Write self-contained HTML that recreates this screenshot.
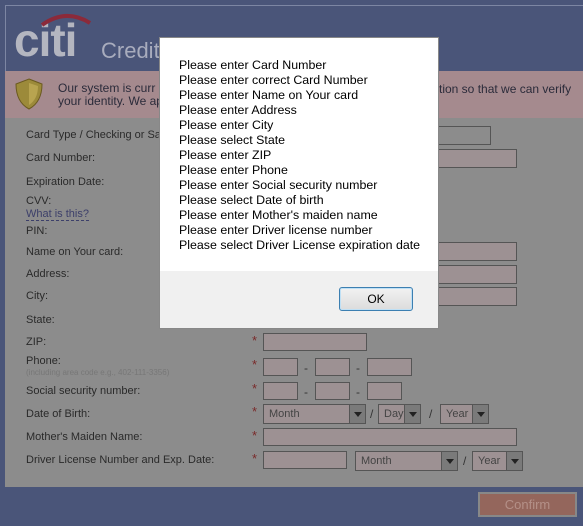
<!DOCTYPE html>
<html><head><style>
*{margin:0;padding:0;box-sizing:border-box}
body{width:583px;height:526px;overflow:hidden;background:#4a5579;font-family:"Liberation Sans",sans-serif;position:relative}
.a{position:absolute}
.l{position:absolute;left:26px;font-size:11px;color:#2a2a2a}
.in{position:absolute;background:#9d9193;border:1px solid #555;height:19px}
.st{position:absolute;color:#7a2a2a;font-size:13px}
.sel{position:absolute;background:#9d9193;border:1px solid #555;height:20px;font-size:11px;color:#444;padding:3px 5px}
.sel b{position:absolute;right:0;top:0;width:16px;height:18px;background:#7a7a7a;border-left:1px solid #555}
.sel b:after{content:"";position:absolute;left:4px;top:7px;border:4px solid transparent;border-top:5px solid #222}
.d{position:absolute;font-size:12px;color:#333}
.msg{position:absolute;left:179px;font-size:12.4px;color:#000;line-height:15px}
</style></head><body>
<div class="a" style="left:5px;top:5px;width:578px;height:66px;background:#4a5579;border-top:1px solid #7d86a3;border-left:1px solid #7d86a3"></div>
<div class="a" style="left:14px;top:13px;font-size:46px;font-weight:bold;color:#b4b6c0;letter-spacing:-1px">citi</div>
<svg class="a" style="left:40px;top:11px" width="52" height="16"><path d="M2 14 Q26 -3 50 12" stroke="#8b2a3a" stroke-width="4" fill="none"/></svg>
<div class="a" style="left:101px;top:38px;font-size:22px;color:#a8acbd">Credit</div>
<div class="a" style="left:5px;top:71px;width:578px;height:47px;background:#a58a8e"></div>
<svg class="a" style="left:14px;top:77px" width="30" height="34"><path d="M15 2 L28 7 Q28 25 15 32 Q2 25 2 7 Z" fill="#9c8a3a" stroke="#6b5a20"/><path d="M15 6 L24 9 Q24 22 15 28 Z" fill="#b8a450"/></svg>
<div class="a" style="left:58px;top:82px;font-size:12px;line-height:13px;color:#2b2b3a">Our system is curr<br>your identity. We ap</div>
<div class="a" style="left:439px;top:82px;font-size:12px;color:#2b2b3a">tion so that we can verify</div>
<div class="a" style="left:5px;top:118px;width:578px;height:369px;background:#8c8c8c"></div>
<div class="l" style="top:129px">Card Type / Checking or Sa</div>
<div class="l" style="top:152px">Card Number:</div>
<div class="l" style="top:176px">Expiration Date:</div>
<div class="l" style="top:195px">CVV:</div>
<div class="l" style="top:208px;color:#3c3f6a;border-bottom:1px dashed #3c3f6a">What is this?</div>
<div class="l" style="top:225px">PIN:</div>
<div class="l" style="top:246px">Name on Your card:</div>
<div class="l" style="top:268px">Address:</div>
<div class="l" style="top:290px">City:</div>
<div class="l" style="top:314px">State:</div>
<div class="l" style="top:336px">ZIP:</div>
<div class="l" style="top:355px">Phone:</div>
<div class="l" style="top:368px;font-size:8px;color:#777">(including area code e.g., 402-111-3356)</div>
<div class="l" style="top:385px">Social security number:</div>
<div class="l" style="top:408px">Date of Birth:</div>
<div class="l" style="top:431px">Mother's Maiden Name:</div>
<div class="l" style="top:454px">Driver License Number and Exp. Date:</div>
<div class="in" style="left:437px;top:126px;width:54px;background:#8c8c8c"></div>
<div class="in" style="left:437px;top:149px;width:80px"></div>
<div class="in" style="left:437px;top:242px;width:80px"></div>
<div class="in" style="left:437px;top:265px;width:80px"></div>
<div class="in" style="left:437px;top:287px;width:80px"></div>
<div class="st" style="left:252px;top:333px">*</div><div class="in" style="left:263px;top:333px;width:104px;height:18px"></div>
<div class="st" style="left:252px;top:357px">*</div><div class="in" style="left:263px;top:358px;width:35px;height:18px"></div><div class="d" style="left:304px;top:361px">-</div><div class="in" style="left:315px;top:358px;width:35px;height:18px"></div><div class="d" style="left:356px;top:361px">-</div><div class="in" style="left:367px;top:358px;width:45px;height:18px"></div>
<div class="st" style="left:252px;top:381px">*</div><div class="in" style="left:263px;top:382px;width:35px;height:18px"></div><div class="d" style="left:304px;top:385px">-</div><div class="in" style="left:315px;top:382px;width:35px;height:18px"></div><div class="d" style="left:356px;top:385px">-</div><div class="in" style="left:367px;top:382px;width:35px;height:18px"></div>
<div class="st" style="left:252px;top:404px">*</div>
<div class="sel" style="left:263px;top:404px;width:103px">Month<b></b></div><div class="d" style="left:370px;top:407px">/</div>
<div class="sel" style="left:378px;top:404px;width:43px">Day<b></b></div><div class="d" style="left:429px;top:407px">/</div>
<div class="sel" style="left:440px;top:404px;width:49px">Year<b></b></div>
<div class="st" style="left:252px;top:428px">*</div><div class="in" style="left:263px;top:428px;width:254px;height:18px"></div>
<div class="st" style="left:252px;top:451px">*</div><div class="in" style="left:263px;top:451px;width:84px;height:18px"></div>
<div class="sel" style="left:355px;top:451px;width:103px">Month<b></b></div><div class="d" style="left:463px;top:454px">/</div>
<div class="sel" style="left:472px;top:451px;width:51px">Year<b></b></div>
<div class="a" style="left:478px;top:492px;width:99px;height:25px;background:#94665c;border:2px solid #888;color:#b49088;font-size:13px;text-align:center;line-height:21px">Confirm</div>
<div class="a" style="left:159px;top:37px;width:280px;height:292px;background:#f0f0f0;border:1px solid #888"></div>
<div class="a" style="left:160px;top:38px;width:278px;height:233px;background:#fff"></div>
<div class="msg" style="top:58px">Please enter Card Number<br>Please enter correct Card Number<br>Please enter Name on Your card<br>Please enter Address<br>Please enter City<br>Please select State<br>Please enter ZIP<br>Please enter Phone<br>Please enter Social security number<br>Please select Date of birth<br>Please enter Mother's maiden name<br>Please enter Driver license number<br>Please select Driver License expiration date</div>
<div class="a" style="left:339px;top:287px;width:74px;height:24px;border:1px solid #3c7fb1;border-radius:3px;background:linear-gradient(#f2f2f2,#dcdcdc);box-shadow:inset 0 0 0 1px #bfe0f5;font-size:12px;text-align:center;line-height:22px">OK</div>
</body></html>
